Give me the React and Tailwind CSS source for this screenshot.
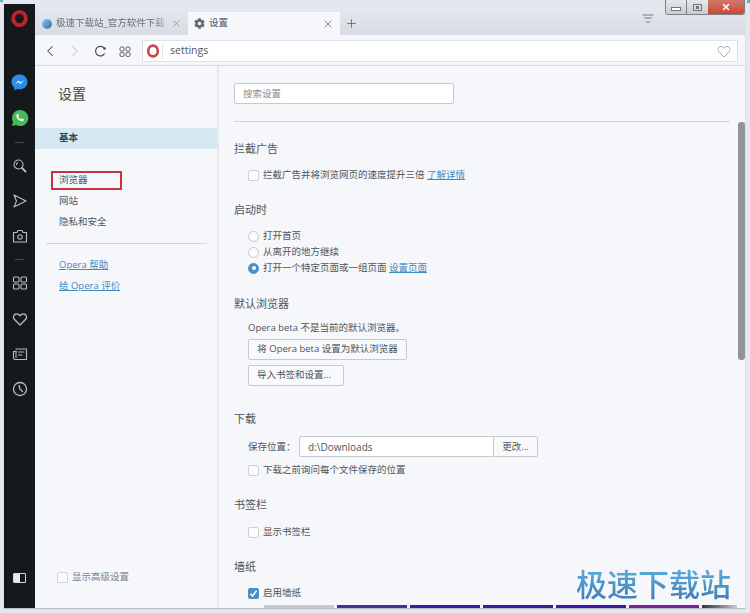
import React from "react";
import { ChevronLeft, ChevronRight, Plus, X } from "lucide-react";
import { FaCog } from "react-icons/fa";

function OperaLogo({ size = 16, rx = 5.2, ry = 5.9, stroke = 3.6, color = "#bd2430" }) {
  return (
    <svg width={size} height={size} viewBox="0 0 16 16" fill="none">
      <ellipse cx="8" cy="8" rx={rx} ry={ry} stroke={color} strokeWidth={stroke} />
    </svg>
  );
}

function Messenger() {
  return (
    <svg width="17" height="17" viewBox="0 0 17 17">
      <path d="M8.5 0.5C3.9 0.5 0.5 3.8 0.5 8c0 2.3 1 4.2 2.7 5.5V16.5l2.7-1.5c.8.2 1.700.3 2.600.3 4.600 0 8-3.300 8-7.300S13.100.5 8.500.5z" fill="#2b8de8" />
      <path d="M3.800 10.200 7.500 6.500 9.600 8.300 13.200 6.300 9.500 10 7.400 8.300z" fill="#e8f3fc" />
    </svg>
  );
}

function Whatsapp() {
  return (
    <svg width="18" height="18" viewBox="0 0 18 18">
      <path d="M9 1a8 8 0 0 0-6.900 12L1 17l4.200-1.100A8 8 0 1 0 9 1z" fill="#4cb85c" />
      <path d="M6.300 4.800c.4-.3.800-.2 1 .2l.6 1.400c.1.300 0 .5-.2.800l-.4.500c.6 1.200 1.500 2 2.700 2.600l.6-.7c.2-.2.400-.2.700-.1l1.400.7c.3.200.4.500.2.900-.4 1-1.400 1.500-2.500 1.200-2.600-.7-4.300-2.400-5-4.800-.2-1 .1-2 .9-2.700z" fill="#f2f7f2" />
    </svg>
  );
}

function Glyph({ children, w = 16, h = 16, sw = 1.1 }) {
  return (
    <svg width={w} height={h} viewBox={`0 0 ${w} ${h}`} fill="none" stroke="#b9bcc0" strokeWidth={sw} strokeLinejoin="round" strokeLinecap="round">
      {children}
    </svg>
  );
}

function Box({ checked = false }) {
  return (
    <span className={`w-[11px] h-[11px] rounded-[2px] border shrink-0 flex items-center justify-center ${checked ? "bg-[#4a90c8] border-[#4a90c8]" : "bg-[#fbfcfd] border-[#cfd2d6]"}`}>
      {checked && (
        <svg width="9" height="9" viewBox="0 0 9 9" fill="none">
          <path d="M1.500 4.800 3.500 7 7.500 1.800" stroke="#fff" strokeWidth="1.500" />
        </svg>
      )}
    </span>
  );
}

function Radio({ checked = false }) {
  return (
    <span className={`w-[11px] h-[11px] rounded-full shrink-0 flex items-center justify-center border ${checked ? "bg-[#4a90c8] border-[#4a90c8]" : "bg-[#fbfcfd] border-[#c4c7cb]"}`}>
      {checked && <span className="w-[4px] h-[4px] rounded-full bg-white" />}
    </span>
  );
}

function Heading({ children, className = "" }) {
  return <div className={`h-4 flex items-center text-[11px] text-[#50555a] ${className}`}>{children}</div>;
}

function Row({ className = "", control, children }) {
  return (
    <div className={`h-4 ml-[14px] flex items-center gap-[4px] text-[9.5px] text-[#50555a] whitespace-nowrap ${className}`}>
      {control}
      <span>{children}</span>
    </div>
  );
}

function A({ children }) {
  return <span className="text-[#3f8abf] underline">{children}</span>;
}

function Btn({ children, className = "" }) {
  return (
    <div className={`h-[21px] ml-[14px] flex items-center justify-center border border-[#c6c9cd] rounded-[2px] bg-[#f8f9fa] text-[9.5px] text-[#50555a] whitespace-nowrap ${className}`}>
      {children}
    </div>
  );
}

function Rail({ children, className = "" }) {
  return <div className={`flex items-center justify-center h-5 ${className}`}>{children}</div>;
}

const thumbs = ["bg-[#c6c9cc]", "bg-[#48309c]", "bg-[#3a1a9e]", "bg-[#3a1a9e]", "bg-[#3f16a8]", "bg-[#7a209c]"];

export default function App() {
  return (
    <div className="w-[750px] h-[613px] relative overflow-hidden bg-[#e3e8f0] pt-[4px] pl-[4px] font-['Open_Sans','Noto_Sans_CJK_SC',sans-serif]">
      <div className="w-[741px] h-[604px] flex shadow-[0_1px_1px_#b8bcc2]">
        {/* Rail */}
        <div className="w-[31px] bg-[#16191c] flex flex-col items-center shrink-0">
          <div className="mt-[4px] h-5 flex items-center"><OperaLogo size={19} rx={5.300} ry={5.600} stroke={3.200} /></div>
          <div className="mt-[44px] h-5 flex items-center"><Messenger /></div>
          <Rail className="mt-[16px]"><Whatsapp /></Rail>
          <div className="mt-[14px] w-[9px] h-px bg-[#4a4d50]" />
          <Rail className="mt-[13px]">
            <Glyph><circle cx="6.500" cy="6.500" r="4.500" /><path d="M10 10l3.500 3.500" strokeWidth="1.800" /><path d="M4.500 6.500a2 2 0 0 1 1-1.700" /></Glyph>
          </Rail>
          <Rail className="mt-[15px]">
            <Glyph><path d="M2 2l12 6-12 6 2.500-6z" /></Glyph>
          </Rail>
          <Rail className="mt-[15px]">
            <Glyph><path d="M1.500 4.500h3.500l1-2h4l1 2h3.500v9.500h-13z" /><circle cx="8" cy="9" r="2.200" /></Glyph>
          </Rail>
          <div className="mt-[13px] w-[9px] h-px bg-[#4a4d50]" />
          <Rail className="mt-[13px]">
            <Glyph><rect x="1.500" y="2" width="5.500" height="5" rx="1" /><rect x="9" y="2" width="5.500" height="5" rx="1" /><rect x="1.500" y="9" width="5.500" height="5" rx="1" /><rect x="9" y="9" width="5.500" height="5" rx="1" /></Glyph>
          </Rail>
          <Rail className="mt-[16px]">
            <Glyph sw={1.300}><path d="M8 14L2.300 8.300C.500 6.200 1.800 2.800 4.700 2.800c1.400 0 2.500.7 3.300 2 .8-1.300 1.900-2 3.300-2 2.900 0 4.200 3.400 2.400 5.500z" /></Glyph>
          </Rail>
          <Rail className="mt-[15px]">
            <Glyph><path d="M4 3h10.500v10.500H3a1.500 1.500 0 0 1-1.500-1.500V5.500H4" /><path d="M4 5v6.500" /><path d="M6.500 6h5.500M6.500 9h3.500" /></Glyph>
          </Rail>
          <Rail className="mt-[15px]">
            <Glyph sw={1.300}><circle cx="8" cy="8" r="6.500" /><path d="M7 4.500L8 8l2.500 2.500" /></Glyph>
          </Rail>
          <div className="mt-auto mb-[25px] w-[13px] h-[10px] border border-[#d8dadc] rounded-[1px] flex">
            <span className="w-[6px] bg-[#e8eaec]" />
          </div>
        </div>

        <div className="flex-1 flex flex-col min-w-0">
          {/* Tabs */}
          <div className="h-[31px] shrink-0 bg-linear-to-b from-[#e4e8ef] to-[#d8dde4] flex items-end pl-[3px] relative">
            <div className="w-[148px] h-[23px] flex items-center pl-[4px] pr-[4px] text-[9.5px] text-[#6b7076]">
              <span className="w-[10px] h-[10px] rounded-full bg-linear-to-br from-[#8cc6ee] to-[#2c6fb0] shrink-0" />
              <span className="ml-[4px] flex-1 whitespace-nowrap [mask-image:linear-gradient(to_right,black_85%,transparent)]">极速下载站_官方软件下载</span>
              <X size={11} strokeWidth={1.400} className="shrink-0 text-[#7c8187]" />
            </div>
            <div className="ml-[2px] w-[152px] h-[23px] bg-[#f5f7fa] flex items-center pl-[6px] pr-[6px] text-[9.500px] text-[#50555a]">
              <FaCog size={11} className="text-[#666a6f] shrink-0" />
              <span className="ml-[4px] flex-1">设置</span>
              <X size={12} strokeWidth={1.400} className="text-[#55595e] shrink-0" />
            </div>
            <Plus size={13} strokeWidth={1.400} className="ml-[5px] mb-[5px] text-[#55595e]" />
            <svg width="12" height="11" viewBox="0 0 12 11" fill="none" className="ml-auto mr-[91px] mb-[10px] text-[#6b7076]" stroke="currentColor" strokeWidth="0.900">
              <path d="M0.500 1h11M2 4h8M3.800 7l2.200 2 2.200-2" />
            </svg>
          </div>
          {/* Toolbar */}
          <div className="h-[31px] shrink-0 bg-[#f5f7fa] border-b border-[#d6d9dd] flex items-center pt-[2px]">
            <ChevronLeft size={18} strokeWidth={1.400} className="ml-[6px] text-[#44484d]" />
            <ChevronRight size={18} strokeWidth={1.400} className="ml-[7px] text-[#c0c4c8]" />
            <svg width="13" height="13" viewBox="0 0 13 13" fill="none" className="ml-[10px] text-[#44484d]">
              <path d="M10.600 8.500A4.800 4.800 0 1 1 10 3" stroke="currentColor" strokeWidth="1.200" />
              <circle cx="10.500" cy="3.500" r="1.300" fill="currentColor" />
            </svg>
            <svg width="12" height="11" viewBox="0 0 12 11" fill="none" stroke="currentColor" strokeWidth="1" className="ml-[12px] text-[#55595e]">
              <rect x="1" y="1" width="4" height="4" rx="1.300" /><rect x="7" y="1" width="4" height="4" rx="1.300" />
              <rect x="1" y="6.500" width="4" height="4" rx="1.300" /><rect x="7" y="6.500" width="4" height="4" rx="1.300" />
            </svg>
            <div className="ml-[11px] w-[596px] h-[22px] bg-white border border-[#dfe2e5] flex items-center">
              <span className="w-[19px] h-[15px] border-r border-[#e2e4e7] flex items-center justify-center ml-px">
                <OperaLogo size={16} rx={4.800} ry={5.400} stroke={2.600} color="#c8454e" />
              </span>
              <span className="ml-[7px] text-[10.500px] text-[#50555a]">settings</span>
              <svg width="14" height="13" viewBox="0 0 14 13" fill="none" stroke="#a5a9ae" strokeWidth="1" className="ml-auto mr-[6px]">
                <path d="M7 12L1.800 6.800C.200 5 1.200 1.500 4 1.500c1.300 0 2.300.6 3 1.800.7-1.200 1.700-1.800 3-1.800 2.800 0 3.800 3.500 2.200 5.300z" />
              </svg>
            </div>
          </div>
          {/* Body */}
          <div className="flex-1 flex bg-[#f5f7fa] min-h-0 overflow-hidden">
            <div className="w-[184px] shrink-0 border-r-2 border-[#e6e9ec] flex flex-col">
              <div className="mt-[17px] ml-[23px] h-5 flex items-center text-[14px] text-[#44484d]">设置</div>
              <div className="mt-[25px] h-[21px] bg-[#d6e9f3] pl-[24px] flex items-center text-[9.500px] font-bold text-[#3c4044]">基本</div>
              <div className="mt-[22px] ml-[16px] w-[71px] h-[19px] border-2 border-[#c8333d] flex items-center pl-[6px] text-[9.500px] text-[#50555a]">浏览器</div>
              <div className="mt-[3px] ml-[24px] h-4 flex items-center text-[9.500px] text-[#50555a]">网站</div>
              <div className="mt-[5px] ml-[24px] h-4 flex items-center text-[9.500px] text-[#50555a]">隐私和安全</div>
              <div className="mt-[13px] ml-[11px] w-[161px] h-px bg-[#d3d6da]" />
              <div className="mt-[13px] ml-[24px] h-4 flex items-center text-[9.500px]"><A>Opera 帮助</A></div>
              <div className="mt-[5px] ml-[24px] h-4 flex items-center text-[9.500px]"><A>给 Opera 评价</A></div>
              <div className="mt-auto mb-[23px] ml-[22px] h-4 flex items-center gap-[4px] text-[9.500px] text-[#7f8388]">
                <Box />显示高级设置
              </div>
            </div>

            <div className="flex-1 pl-[15px] min-w-0">
              <div className="mt-[17px] w-[220px] h-[21px] bg-white border border-[#c6c9cd] rounded-[2px] flex items-center pl-[8px] pt-[1px] text-[9.500px] text-[#8b8f94]">搜索设置</div>
              <div className="mt-[17px] w-[496px] h-px bg-[#cfd2d6]" />
              <Heading className="mt-[19px]">拦截广告</Heading>
              <Row className="mt-[10px]" control={<Box />}>拦截广告并将浏览网页的速度提升三倍 <A>了解详情</A></Row>
              <Heading className="mt-[19px]">启动时</Heading>
              <Row className="mt-[10px]" control={<Radio />}>打开首页</Row>
              <Row control={<Radio />}>从离开的地方继续</Row>
              <Row control={<Radio checked />}>打开一个特定页面或一组页面 <A>设置页面</A></Row>
              <Heading className="mt-[20px]">默认浏览器</Heading>
              <div className="mt-[8px] h-4 ml-[14px] flex items-center text-[9.500px] text-[#50555a]">Opera beta 不是当前的默认浏览器。</div>
              <Btn className="mt-[3px] w-[159px]">将 Opera beta 设置为默认浏览器</Btn>
              <Btn className="mt-[5px] w-[96px] pr-[4px]">导入书签和设置...</Btn>
              <Heading className="mt-[24px] pt-[2px]">下载</Heading>
              <div className="mt-[10px] ml-[14px] h-[21px] flex items-center text-[9.500px] text-[#50555a]">
                <span className="w-[51px] pt-[1px]">保存位置：</span>
                <div className="w-[195px] h-[21px] bg-white border border-[#c6c9cd] rounded-l-[2px] flex items-center pl-[8px] pt-[1px] text-[10px]">d:\Downloads</div>
                <div className="w-[44px] h-[21px] border border-l-0 border-[#c6c9cd] rounded-r-[2px] bg-[#f8f9fa] flex items-center justify-center pt-[1px]">更改...</div>
              </div>
              <Row className="mt-[5px]" control={<Box />}>下载之前询问每个文件保存的位置</Row>
              <Heading className="mt-[19px]">书签栏</Heading>
              <Row className="mt-[11px]" control={<Box />}>显示书签栏</Row>
              <Heading className="mt-[19px]">墙纸</Heading>
              <Row className="mt-[10px]" control={<Box checked />}>启用墙纸</Row>
              <div className="mt-[4px] ml-[30px] flex gap-[3px]">
                {thumbs.map((c, i) => (
                  <div key={i} className={`w-[70px] h-10 shrink-0 ${c}`} />
                ))}
                <div className="w-[35px] h-10 shrink-0 bg-linear-to-r from-[#33333a] to-[#c8ccd0]" />
              </div>
            </div>

            <div className="w-[8px] shrink-0 pl-px">
              <div className="mt-[56px] h-[238px] w-[7px] rounded-[3px] bg-[#909498]" />
            </div>
          </div>
        </div>
      </div>

      {/* Window controls */}
      <div className="absolute top-0 left-[665px] w-[80px] h-[15px] flex rounded-b-[3px] overflow-hidden border border-t-0 border-[#7d8186]">
        <div className="w-[21px] bg-linear-to-b from-[#e6e8eb] to-[#c9cdd1] border-r border-[#7d8186] flex items-center justify-center">
          <span className="w-[10px] h-[4px] border border-[#73777c] bg-white mt-[3px]" />
        </div>
        <div className="w-[21px] bg-linear-to-b from-[#e6e8eb] to-[#c9cdd1] flex items-center justify-center">
          <span className="w-[9px] h-[7px] border border-[#73777c] flex items-center justify-center"><span className="w-[3px] h-[3px] bg-[#73777c]" /></span>
        </div>
        <div className="flex-1 bg-linear-to-b from-[#d2786a] to-[#cb4630] flex items-center justify-center">
          <X size={10} strokeWidth={3.500} className="text-white" />
        </div>
      </div>

      {/* Watermark */}
      <div className="absolute left-[576px] top-[563px] text-[31px] leading-[40px] font-medium whitespace-nowrap bg-linear-to-b from-[#5cb6e4] to-[#3f78b0] bg-clip-text text-transparent font-['Noto_Sans_CJK_SC',sans-serif]">极速下载站</div>

      {/* Desktop showing at the window's corners */}
      <div className="absolute top-0 left-0 w-[3px] h-[2px] bg-[#5fb8b0]" />
      <div className="absolute top-0 right-0 w-[3px] h-[3px] bg-[#5fb8b0]" />
    </div>
  );
}
